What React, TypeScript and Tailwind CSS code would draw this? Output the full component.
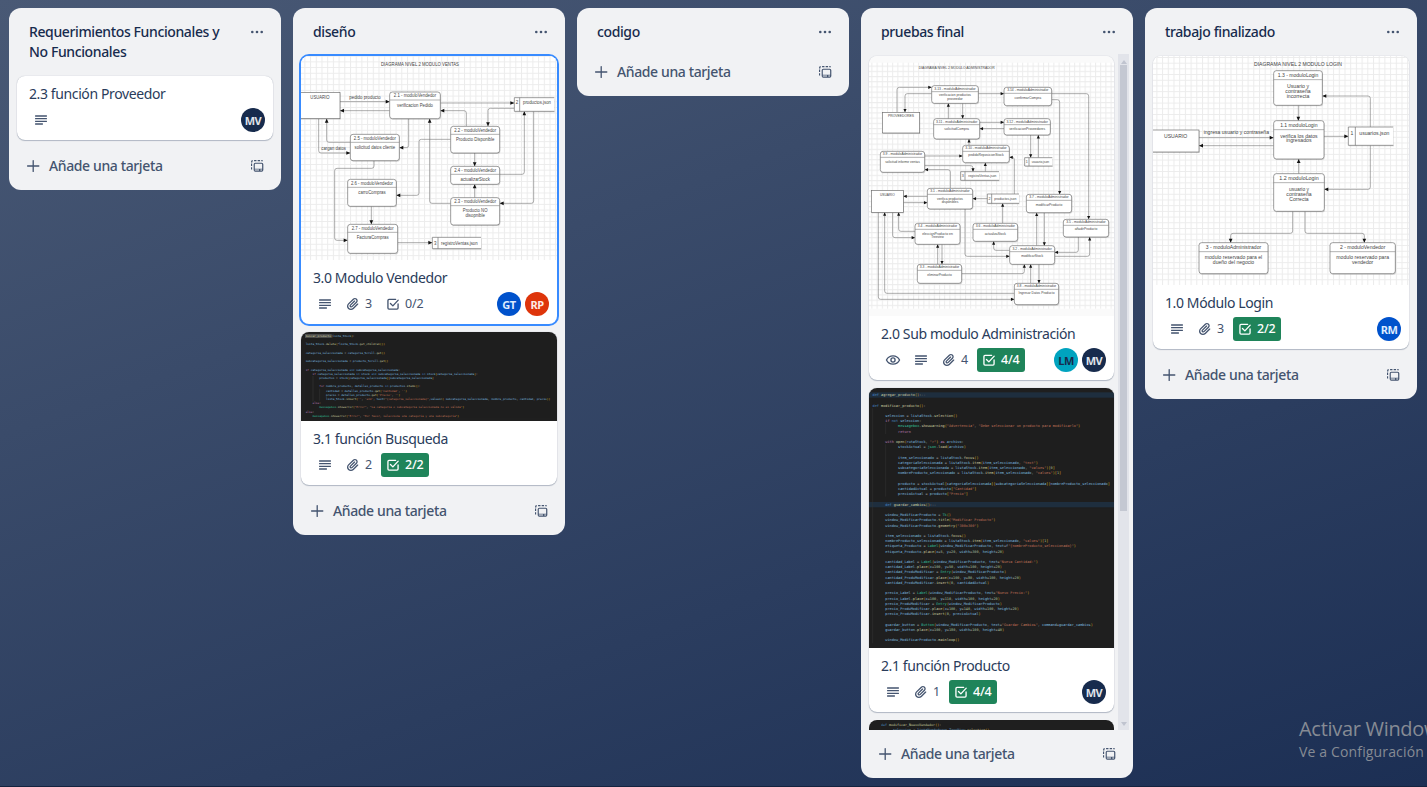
import React from "react";

/* ---------- icons ---------- */

function DescriptionIcon() {
  return (
    <svg viewBox="0 0 24 24" className="size-4" fill="currentColor">
      <rect x="3" y="5" width="18" height="2" rx="0.6" />
      <rect x="3" y="9" width="18" height="2" rx="0.6" />
      <rect x="3" y="13" width="18" height="2" rx="0.6" />
      <rect x="3" y="17" width="12" height="2" rx="0.6" />
    </svg>
  );
}

function AttachmentIcon() {
  return (
    <svg viewBox="0 0 24 24" className="size-4" fill="currentColor">
      <path d="M11.6426 17.9647C10.1123 19.46 7.62736 19.4606 6.10092 17.9691C4.57505 16.478 4.57769 14.0467 6.10253 12.5566L13.2505 5.57184C14.1476 4.6952 15.5861 4.69251 16.4832 5.56921C17.3763 6.44184 17.3778 7.85135 16.4869 8.72199L9.78361 15.2722C9.53288 15.5172 9.12807 15.5163 8.86954 15.2636C8.61073 15.0107 8.60963 14.6158 8.86954 14.3618L15.0989 8.27463C15.4812 7.90109 15.4812 7.29546 15.0989 6.92192C14.7167 6.54838 14.0969 6.54838 13.7146 6.92192L7.48523 13.0091C6.45911 14.0118 6.46356 15.618 7.48523 16.6163C8.50674 17.6145 10.1511 17.6186 11.1679 16.6249L17.8712 10.0747C19.5274 8.45632 19.5244 5.83555 17.8676 4.2165C16.2047 2.59156 13.5266 2.59657 11.8662 4.21913L4.71822 11.2039C2.42951 13.4404 2.42555 17.083 4.71661 19.3218C7.00774 21.5606 10.7323 21.5597 13.0269 19.3174L19.7133 12.7837C20.0956 12.4101 20.0956 11.8045 19.7133 11.431C19.331 11.0574 18.7113 11.0574 18.329 11.431L11.6426 17.9647Z" />
    </svg>
  );
}

function ChecklistIcon() {
  return (
    <svg viewBox="0 0 24 24" className="size-4" fill="none" stroke="currentColor" strokeWidth="2" strokeLinecap="round" strokeLinejoin="round">
      <path d="M16 5H6a1.6 1.6 0 0 0-1.6 1.6V18A1.6 1.6 0 0 0 6 19.6h12a1.6 1.6 0 0 0 1.6-1.6v-6" />
      <path d="M8.2 11.2l3.6 3.6L19.8 6.2" />
    </svg>
  );
}

function WatchIcon() {
  return (
    <svg viewBox="0 0 24 24" className="size-4" fill="none" stroke="currentColor" strokeWidth="2">
      <path d="M2.2 12C4.2 8 7.8 5.8 12 5.8S19.8 8 21.8 12C19.8 16 16.2 18.2 12 18.2S4.2 16 2.2 12Z" strokeLinejoin="round" />
      <circle cx="12" cy="12" r="3.1" />
    </svg>
  );
}

function PlusIcon() {
  return (
    <svg viewBox="0 0 16 16" className="size-4 shrink-0" fill="none" stroke="currentColor" strokeWidth="1.3" strokeLinecap="round">
      <path d="M8.2 2.6V13.4M2.6 8H13.8" />
    </svg>
  );
}

function TemplateIcon() {
  return (
    <svg viewBox="0 0 24 24" className="size-4" fill="currentColor">
      <path d="M3 6a3 3 0 0 1 2.6-3v2A1 1 0 0 0 5 6v.6H3ZM7.6 3h3.6v1.7H7.6ZM13 3h3.6v1.7H13ZM18.4 3h.6a2 2 0 0 1 2 2h-2.6ZM3 8.4h1.7V12H3ZM3 13.8h1.7v3.400H3Z" />
      <path fillRule="evenodd" d="M9.500 7h9.500a2.500 2.500 0 0 1 2.500 2.500v8.500a2.500 2.500 0 0 1-2.500 2.500H9.500a2.500 2.500 0 0 1-2.500-2.500V9.500a2.500 2.500 0 0 1 2.500-2.500Zm0 1.800a.8.8 0 0 0-.8.8v6.400h11V9.600a.8.8 0 0 0-.8-.8ZM8.700 17.300v1.400h6.300v-1.400ZM17 17.300v1.400h2.600v-1.400Z" />
    </svg>
  );
}

function MoreIcon() {
  return (
    <svg viewBox="0 0 16 16" className="size-4" fill="currentColor">
      <circle cx="3.3" cy="8" r="1.3" />
      <circle cx="8" cy="8" r="1.3" />
      <circle cx="12.7" cy="8" r="1.3" />
    </svg>
  );
}

/* ---------- flow diagrams ---------- */

type Label = [text: string, cx: number, cy: number, width: number];
type Box = { x: number; y: number; w: number; h: number; head?: [string, number]; lines: [string, number, number][] };
type Store = { x: number; y: number; w: number; h: number; cell: number; id: string; label: Label };
type Diagram = {
  labels: Label[];
  boxes: Box[];
  stores: Store[];
  edges: number[][];
  font: number;
  headH: number;
};

function Txt({ l, size }: { l: Label; size: number }) {
  return (
    <text x={l[1]} y={l[2] + size * 0.36} textAnchor="middle" fontSize={size} textLength={l[3]} lengthAdjust="spacingAndGlyphs" fill="#444">
      {l[0]}
    </text>
  );
}

function roundedPath(p: number[]) {
  const pts: [number, number][] = [];
  for (let i = 0; i < p.length; i += 2) pts.push([p[i], p[i + 1]]);
  let d = `M${pts[0][0]} ${pts[0][1]}`;
  for (let i = 1; i < pts.length - 1; i++) {
    const [ax, ay] = pts[i - 1];
    const [bx, by] = pts[i];
    const [cx, cy] = pts[i + 1];
    const r = 7;
    d += `L${bx - Math.sign(bx - ax) * r} ${by - Math.sign(by - ay) * r}`;
    d += `Q${bx} ${by} ${bx + Math.sign(cx - bx) * r} ${by + Math.sign(cy - by) * r}`;
  }
  const e = pts[pts.length - 1];
  return d + `L${e[0]} ${e[1]}`;
}

function Edge({ p, k }: { p: number[]; k: number }) {
  const n = p.length;
  const x = p[n - 2];
  const y = p[n - 1];
  const dx = Math.sign(x - p[n - 4]);
  const dy = Math.sign(y - p[n - 3]);
  const a = 12 * k;
  const b = 5.5 * k;
  return (
    <g>
      <path d={roundedPath(p)} fill="none" stroke="#777" strokeWidth="1.8" />
      <path d={`M${x} ${y}L${x - dx * a - dy * b} ${y - dy * a - dx * b}L${x - dx * a + dy * b} ${y - dy * a + dx * b}Z`} fill="#111" />
    </g>
  );
}

function DiagramShapes({ d }: { d: Diagram }) {
  return (
    <g fontFamily="'Liberation Sans', Arial, sans-serif">
      {d.edges.map((p, i) => (
        <Edge key={i} p={p} k={d.headH < 20 ? 0.85 : 1} />
      ))}
      {d.boxes.map((b, i) => {
        const r = b.head ? 8 : 0;
        return (
          <g key={i}>
            <rect x={b.x + 2} y={b.y + 3} width={b.w} height={b.h} rx={r} fill="#000" opacity="0.15" />
            <rect x={b.x} y={b.y} width={b.w} height={b.h} rx={r} fill="#fff" stroke="#6c6c6c" strokeWidth="2" />
            {b.head && (
              <>
                <path d={`M${b.x} ${b.y + d.headH}h${b.w}`} stroke="#808080" strokeWidth="1.8" />
                <Txt l={[b.head[0], b.x + b.w / 2, b.y + d.headH / 2 - 0.5, b.head[1]]} size={d.font} />
              </>
            )}
            {b.lines.map((t, j) => (
              <Txt key={j} l={[t[0], b.x + b.w / 2, t[1], t[2]]} size={d.font} />
            ))}
          </g>
        );
      })}
      {d.stores.map((s, i) => (
        <g key={i}>
          <rect x={s.x + 2} y={s.y + 3} width={s.w} height={s.h} fill="#000" opacity="0.12" />
          <rect x={s.x} y={s.y} width={s.w} height={s.h} fill="#fff" />
          <path d={`M${s.x + s.w} ${s.y}H${s.x}V${s.y + s.h}H${s.x + s.w}M${s.x + s.cell} ${s.y}v${s.h}`} fill="none" stroke="#6c6c6c" strokeWidth="2" />
          <text x={s.x + s.cell / 2} y={s.label[2] + d.font * 0.36} fontSize={d.font} textAnchor="middle" fill="#444">
            {s.id}
          </text>
          <Txt l={s.label} size={d.font} />
        </g>
      ))}
      {d.labels.map((l, i) => (
        <Txt key={i} l={l} size={d.font + (i === 0 ? 1 : 0)} />
      ))}
    </g>
  );
}

function GridPattern({ id, size }: { id: string; size: number }) {
  return (
    <defs>
      <pattern id={id} width={size} height={size} patternUnits="userSpaceOnUse">
        <path d={`M0 1.5H${size}M1.5 0V${size}`} stroke="#ececec" strokeWidth="3" />
      </pattern>
    </defs>
  );
}

const ventas: Diagram = {
  font: 13.5,
  headH: 24,
  labels: [
    ["DIAGRAMA NIVEL 2 MODULO VENTAS", 381, 42, 234],
    ["pedido producto", 216, 141, 94],
    ["cargan datos", 122, 295, 74],
  ],
  boxes: [
    { x: 10, y: 127, w: 131, h: 79, lines: [] },
    { x: 290, y: 126, w: 152, h: 80, head: ["2.1 - moduloVendedor", 127], lines: [["verificacion Pedido", 165, 108]] },
    { x: 473, y: 229, w: 147, h: 80, head: ["2.2 - moduloVendedor", 126], lines: [["Producto Disponible", 268, 115]] },
    { x: 473, y: 349, w: 147, h: 54, head: ["2.4 - moduloVendedor", 126], lines: [["actualizarStock", 387, 88]] },
    { x: 473, y: 443, w: 147, h: 82, head: ["2.3 - moduloVendedor", 126], lines: [["Producto NO", 482, 74], ["disopnible", 495, 58]] },
    { x: 172, y: 253, w: 147, h: 79, head: ["2.5 - moduloVendedor", 126], lines: [["solicitud datos cliente", 292, 122]] },
    { x: 164, y: 388, w: 146, h: 81, head: ["2.6 - moduloVendedor", 126], lines: [["carroCompras", 427, 82]] },
    { x: 164, y: 523, w: 150, h: 87, head: ["2.7 - moduloVendedor", 126], lines: [["FacturaCompras", 562, 96]] },
  ],
  stores: [
    { x: 664, y: 143, w: 120, h: 41, cell: 16, id: "2", label: ["productos.json", 732, 158, 84] },
    { x: 418, y: 562, w: 146, h: 34, cell: 17, id: "3", label: ["registroVentas.json", 499, 579, 110] },
  ],
  edges: [
    [141, 155, 290, 155],
    [290, 182, 141, 182],
    [442, 159, 664, 159],
    [520, 229, 520, 182, 442, 182],
    [664, 175, 585, 175, 585, 229],
    [545, 309, 545, 349],
    [545, 443, 545, 403],
    [620, 373, 694, 373, 694, 184],
    [722, 184, 722, 460, 620, 460],
    [473, 460, 410, 460, 410, 206],
    [473, 268, 378, 268, 378, 436, 310, 436],
    [347, 206, 347, 293, 319, 293],
    [77, 206, 77, 309, 172, 309],
    [172, 277, 101, 277, 101, 206],
    [243, 332, 243, 355, 125, 355, 125, 571, 164, 571],
    [235, 469, 235, 523],
    [314, 578, 418, 578],
  ],
};

const administrador: Diagram = {
  font: 11,
  headH: 18,
  labels: [["DIAGRAMA NIVEL 2 MODULO ADMINISTRADOR", 287, 52, 228]],
  boxes: [
    { x: 64, y: 187, w: 112, h: 62, lines: [["PROVEEDORES", 198, 78]] },
    { x: 31, y: 421, w: 96, h: 66, lines: [["USUARIO", 434, 44]] },
    { x: 212, y: 107, w: 140, h: 53, head: ["3.13 - moduloAdministrador", 124], lines: [["verificacion productos", 135, 96], ["proveedor", 146, 46]] },
    { x: 429, y: 112, w: 143, h: 55, head: ["3.14 - moduloAdministrador", 124], lines: [["confirmarCompra", 142, 80]] },
    { x: 218, y: 206, w: 138, h: 61, head: ["3.11 - moduloAdministrador", 124], lines: [["solicitudCompra", 235, 74]] },
    { x: 429, y: 206, w: 139, h: 49, head: ["3.12 - moduloAdministrador", 124], lines: [["verificacionProveedores", 235, 108]] },
    { x: 305, y: 286, w: 140, h: 52, head: ["3.10 - moduloAdministrador", 124], lines: [["pedidoReposicionStock", 315, 106]] },
    { x: 58, y: 304, w: 133, h: 63, head: ["3.9 - moduloAdministrador", 118], lines: [["solicitud informe ventas", 334, 104]] },
    { x: 199, y: 415, w: 136, h: 62, head: ["3.1 - moduloAdministrador", 118], lines: [["verifica productos", 446, 78], ["disponibles", 456, 50]] },
    { x: 496, y: 433, w: 136, h: 55, head: ["3.7 - moduloAdministrador", 118], lines: [["modificarProducto", 463, 80]] },
    { x: 607, y: 508, w: 136, h: 53, head: ["3.5 - moduloAdministrador", 118], lines: [["añadirProducto", 537, 68]] },
    { x: 162, y: 520, w: 135, h: 63, head: ["3.4 - moduloAdministrador", 118], lines: [["eleccionProducto en", 550, 92], ["Treeview", 560, 38]] },
    { x: 336, y: 520, w: 134, h: 54, head: ["3.6 - moduloAdministrador", 118], lines: [["actualizaStock", 550, 64]] },
    { x: 446, y: 587, w: 135, h: 56, head: ["3.2 - moduloAdministrador", 118], lines: [["modificarStock", 617, 66]] },
    { x: 169, y: 643, w: 133, h: 57, head: ["3.3 - moduloAdministrador", 118], lines: [["eliminarProducto", 674, 74]] },
    { x: 460, y: 700, w: 133, h: 64, head: ["3.8 - moduloAdministrador", 118], lines: [["Ingresar Datos Producto", 728, 108]] },
  ],
  stores: [
    { x: 491, y: 323, w: 83, h: 25, cell: 13, id: "1", label: ["usuario.json", 538, 335, 52] },
    { x: 299, y: 365, w: 115, h: 26, cell: 13, id: "3", label: ["registroVentas.json", 364, 378, 84] },
    { x: 379, y: 432, w: 95, h: 28, cell: 13, id: "2", label: ["productos.json", 433, 446, 66] },
  ],
  edges: [
    [108, 187, 108, 112, 212, 112],
    [212, 131, 132, 131, 132, 187],
    [352, 131, 429, 131],
    [262, 206, 262, 160],
    [305, 160, 305, 206],
    [356, 217, 429, 217],
    [429, 236, 356, 236],
    [572, 131, 683, 131, 683, 508],
    [572, 149, 596, 149, 596, 433],
    [324, 286, 324, 267],
    [191, 318, 305, 318],
    [191, 347, 336, 347, 336, 365],
    [373, 365, 373, 338],
    [460, 432, 460, 322, 445, 322],
    [509, 255, 509, 323],
    [532, 323, 532, 255],
    [268, 415, 268, 359, 191, 359],
    [199, 439, 127, 439],
    [127, 458, 199, 458],
    [379, 446, 335, 446],
    [312, 477, 312, 619, 446, 619],
    [52, 487, 52, 748, 460, 748],
    [460, 730, 71, 730, 71, 487],
    [95, 487, 95, 563, 162, 563],
    [162, 544, 113, 544, 113, 487],
    [425, 520, 425, 460],
    [446, 601, 398, 601, 398, 574],
    [527, 587, 527, 488],
    [550, 488, 550, 587],
    [652, 561, 652, 607, 581, 607],
    [581, 619, 686, 619, 686, 561],
    [302, 671, 490, 671, 490, 643],
    [230, 643, 230, 583],
    [243, 583, 243, 643],
    [509, 700, 509, 643],
    [534, 643, 534, 700],
  ],
};

const login: Diagram = {
  font: 15,
  headH: 27,
  labels: [
    ["DIAGRAMA NIVEL 2 MODULO LOGIN", 459, 193, 264],
    ["ingresa usuario y contraseña", 274, 397, 196],
  ],
  boxes: [
    { x: 10, y: 390, w: 152, h: 66, lines: [] },
    { x: 386, y: 212, w: 146, h: 104, head: ["1.3 - moduloLogin", 122], lines: [["Usuario y", 258, 66], ["contraseña", 273, 76], ["incorrecta", 288, 68]] },
    { x: 386, y: 362, w: 151, h: 115, head: ["1.1 moduloLogin", 112], lines: [["verifica los datos", 408, 112], ["ingresados", 422, 76]] },
    { x: 386, y: 521, w: 152, h: 113, head: ["1.2  moduloLogin", 118], lines: [["usuario y", 567, 60], ["contraseña", 582, 76], ["Correcta", 597, 58]] },
    { x: 162, y: 728, w: 207, h: 93, head: ["3 - moduloAdministrador", 166], lines: [["modulo reservado para el", 773, 172], ["dueño del negocio", 787, 124]] },
    { x: 555, y: 728, w: 196, h: 93, head: ["2 - moduloVendedor", 136], lines: [["modulo reservado para", 773, 158], ["vendedor", 787, 64]] },
  ],
  stores: [{ x: 610, y: 381, w: 135, h: 55, cell: 21, id: "1", label: ["usuarios.json", 688, 399, 90] }],
  edges: [
    [460, 316, 460, 362],
    [162, 413, 386, 413],
    [386, 437, 162, 437],
    [537, 409, 610, 409],
    [461, 521, 461, 477],
    [676, 381, 676, 288, 532, 288],
    [676, 436, 676, 568, 538, 568],
    [443, 634, 443, 700, 257, 700, 257, 728],
    [480, 634, 480, 700, 658, 700, 658, 728],
  ],
};

function VentasCover() {
  return (
    <svg viewBox="24 18 768 612" className="block h-[204px] w-full bg-white">
      <GridPattern id="grid-ventas" size={17.1} />
      <rect x="24" y="18" width="768" height="612" fill="url(#grid-ventas)" />
      <DiagramShapes d={ventas} />
      <g fontFamily="'Liberation Sans', Arial, sans-serif">
        <Txt l={["USUARIO", 81, 142, 58]} size={13.5} />
      </g>
    </svg>
  );
}

function AdministradorCover() {
  return (
    <svg viewBox="24 18 735 780" className="block h-[260px] w-full bg-[#fafafa]">
      <GridPattern id="grid-admin" size={15.6} />
      <rect x="24" y="38" width="735" height="738" fill="#fff" />
      <rect x="24" y="38" width="735" height="738" fill="url(#grid-admin)" />
      <DiagramShapes d={administrador} />
    </svg>
  );
}

function LoginCover() {
  return (
    <svg viewBox="24 168 768 687" className="block h-[229px] w-full bg-white">
      <GridPattern id="grid-login" size={17.1} />
      <rect x="24" y="168" width="768" height="687" fill="url(#grid-login)" />
      <DiagramShapes d={login} />
      <g fontFamily="'Liberation Sans', Arial, sans-serif">
        <Txt l={["USUARIO", 92, 408, 70]} size={15} />
      </g>
    </svg>
  );
}

/* ---------- code covers ---------- */

type CodeLine = [row: number, indent: number, text: string];

const TOKEN = /("[^"]*"?|'[^']*'?)|(\b\d+\b)|([A-Za-z_À-ÿ][\wÀ-ÿ]*)(?=(\()?)|([()[\]{}])|([^\w"'()[\]{}]+)/g;
const CLASSES = ["Tk", "Label", "Entry", "Button", "messagebox", "json"];
const CONTROL = ["if", "else", "for", "with", "as", "return"];
const WORDS = ["def", "and", "in", "not"];

function tokenColor(m: RegExpMatchArray) {
  if (m[1]) return "#ce7a5e";
  if (m[2]) return "#b5cea8";
  if (m[3]) {
    if (CLASSES.includes(m[3])) return "#35c9a0";
    if (CONTROL.includes(m[3])) return "#c586c0";
    if (WORDS.includes(m[3])) return "#4a90d0";
    return m[4] ? "#dcdcaa" : "#86c5ea";
  }
  if (m[5]) return "#e8c020";
  return "#b4b4b4";
}

function Code({ lines, x, y, pitch, char }: { lines: CodeLine[]; x: number; y: number; pitch: number; char: number }) {
  const size = char / 0.602;
  return (
    <g fontFamily="'DejaVu Sans Mono', monospace" fontSize={size} opacity="0.92">
      {lines.map(([row, indent, text]) => (
        <text key={row} x={x + indent * char} y={y + row * pitch + size * 0.32}>
          {Array.from(text.matchAll(TOKEN)).map((m, i) => (
            <tspan key={i} fill={tokenColor(m)}>
              {m[0]}
            </tspan>
          ))}
        </text>
      ))}
    </g>
  );
}

const busqueda: CodeLine[] = [
  [0, 0, "buscar_producto(lista_Stock):"],
  [2, 0, "lista_Stock.delete(*lista_Stock.get_children())"],
  [4, 0, "categoria_seleccionada = categoria_Scroll.get()"],
  [6, 0, "subcategoria_seleccionada = producto_Scroll.get()"],
  [8, 0, "if categoria_seleccionada and subcategoria_seleccionada:"],
  [9, 4, "if categoria_seleccionada in stock and subcategoria_seleccionada in stock[categoria_seleccionada]:"],
  [10, 8, "productos = stock[categoria_seleccionada][subcategoria_seleccionada]"],
  [12, 8, "for nombre_producto, detalles_producto in productos.items():"],
  [13, 12, "cantidad = detalles_producto.get('Cantidad', '')"],
  [14, 12, "precio = detalles_producto.get('Precio', '')"],
  [15, 12, "lista_Stock.insert('', 'end', text=\"{categoria_seleccionada}\",values=( subcategoria_seleccionada, nombre_producto, cantidad, precio))"],
  [16, 4, "else:"],
  [17, 8, 'messagebox.showerror("Error", "La categoria o subcategoria seleccionada no es válida")'],
  [18, 0, "else:"],
  [19, 4, 'messagebox.showerror("Error", "Por favor, seleccione una categoría y una subcategoría")'],
];

const producto: CodeLine[] = [
  [0, -6, "def agregar_producto():--"],
  [2, -6, "def modificar_producto():"],
  [4, 0, "seleccion = listaStock.selection()"],
  [5, 0, "if not seleccion:"],
  [6, 6, 'messagebox.showwarning("Advertencia", "Debe seleccionar un producto para modificarlo")'],
  [7, 6, "return"],
  [9, 0, 'with open(rutaStock, "r") as archivo:'],
  [10, 6, "stockActual = json.load(archivo)"],
  [12, 6, "item_seleccionado = listaStock.focus()"],
  [13, 6, 'categoriaSeleccionada = listaStock.item(item_seleccionado, "text")'],
  [14, 6, 'subcategoriaSeleccionada = listaStock.item(item_seleccionado, "values")[0]'],
  [15, 6, 'nombreProducto_seleccionado = listaStock.item(item_seleccionado, "values")[1]'],
  [17, 6, "producto = stockActual[categoriaSeleccionada][subcategoriaSeleccionada][nombreProducto_seleccionado]"],
  [18, 6, 'cantidadActual = producto["Cantidad"]'],
  [19, 6, 'precioActual = producto["Precio"]'],
  [21, 0, "def guardar_cambios():--"],
  [23, 0, "window_ModificarProducto = Tk()"],
  [24, 0, 'window_ModificarProducto.title("Modificar Producto")'],
  [25, 0, 'window_ModificarProducto.geometry("300x300")'],
  [27, 0, "item_seleccionado = listaStock.focus()"],
  [28, 0, 'nombreProducto_seleccionado = listaStock.item(item_seleccionado, "values")[1]'],
  [29, 0, 'etiqueta_Producto = Label(window_ModificarProducto, text=f"{nombreProducto_seleccionado}")'],
  [30, 0, "etiqueta_Producto.place(x=5, y=20, width=300, height=20)"],
  [32, 0, 'cantidad_Label = Label(window_ModificarProducto, text="Nueva Cantidad:")'],
  [33, 0, "cantidad_Label.place(x=100, y=50, width=100, height=20)"],
  [34, 0, "cantidad_ProduModificar = Entry(window_ModificarProducto)"],
  [35, 0, "cantidad_ProduModificar.place(x=100, y=80, width=100, height=20)"],
  [36, 0, "cantidad_ProduModificar.insert(0, cantidadActual)"],
  [38, 0, 'precio_Label = Label(window_ModificarProducto, text="Nuevo Precio:")'],
  [39, 0, "precio_Label.place(x=100, y=110, width=100, height=20)"],
  [40, 0, "precio_ProduModificar = Entry(window_ModificarProducto)"],
  [41, 0, "precio_ProduModificar.place(x=100, y=140, width=100, height=20)"],
  [42, 0, "precio_ProduModificar.insert(0, precioActual)"],
  [44, 0, 'guardar_button = Button(window_ModificarProducto, text="Guardar Cambios", command=guardar_cambios)'],
  [45, 0, "guardar_button.place(x=100, y=180, width=100, height=40)"],
  [47, 0, "window_ModificarProducto.mainloop()"],
];

const vendedor: CodeLine[] = [
  [0, 0, "def modificar_NuevoVendedor():"],
  [1, 6, "seleccion = listaVendedores_TreeView.selection()"],
];

function BusquedaCover() {
  return (
    <svg viewBox="24 216 768 267" className="block h-[89px] w-full bg-[#1f1f1f]">
      <rect x="36" y="222" width="80" height="12" fill="#4b4b4b" />
      <path d="M60 348V425M80 386V422" stroke="#383838" strokeWidth="1.5" />
      <Code lines={busqueda} x={38} y={228} pitch={12.6} char={5.09} />
    </svg>
  );
}

function ProductoCover() {
  return (
    <svg viewBox="24 234 735 780" className="block h-[260px] w-full bg-[#1f1f1f]">
      <rect x="24" y="247" width="735" height="16" fill="#1f2f3e" />
      <rect x="24" y="576" width="735" height="16" fill="#1f2f3e" />
      <path d="M35 295V1000M74 340V372M74 403V560" stroke="#363636" strokeWidth="1.5" />
      <Code lines={producto} x={73} y={255} pitch={15.65} char={6.38} />
    </svg>
  );
}

function VendedorCover() {
  return (
    <svg viewBox="24 240 735 780" className="block h-[260px] w-full bg-[#1f1f1f]">
      <Code lines={vendedor} x={60} y={256} pitch={13} char={6.05} />
    </svg>
  );
}

/* ---------- board ---------- */

const AVATARS = {
  MV: "bg-[#172b4d] text-[#dfe3ea]",
  GT: "bg-[#0052cc] text-[#deebff]",
  RP: "bg-[#de350b] text-[#ffebe6]",
  LM: "bg-[#00a3bf] text-[#172b4d]",
  RM: "bg-[#0052cc] text-[#deebff]",
};

function Avatar({ who }: { who: keyof typeof AVATARS }) {
  return (
    <span className={`flex size-6 items-center justify-center rounded-full text-[11px] leading-none font-bold tracking-[-0.5px] ${AVATARS[who]}`}>
      {who}
    </span>
  );
}

type CardProps = {
  title: string;
  cover?: React.ReactNode;
  watching?: boolean;
  attachments?: number;
  checklist?: string;
  done?: boolean;
  members: (keyof typeof AVATARS)[];
  selected?: boolean;
};

function Card({ title, cover, watching, attachments, checklist, done, members, selected }: CardProps) {
  const edge = selected
    ? "shadow-[0_0_0_2px_#388bff]"
    : "shadow-[0_1px_1px_#091e4240,0_0_1px_#091e424f]";
  return (
    <li className={`shrink-0 rounded-lg bg-white ${edge}`}>
      {cover && <div className="overflow-hidden rounded-t-lg">{cover}</div>}
      <div className="py-2 pr-2 pl-3">
        <h3 className="mb-1 text-sm leading-5 tracking-[-0.39px] whitespace-nowrap text-[#2a3c5b]">{title}</h3>
        <div className="flex h-6 items-center justify-between text-[#44546f]">
          <div className="flex gap-1 text-[12.5px] tracking-[-0.2px]">
            {watching && <span className="flex size-6 items-center justify-center"><WatchIcon /></span>}
            <span className="flex size-6 items-center justify-center"><DescriptionIcon /></span>
            {attachments !== undefined && (
              <span className="flex h-6 w-9 items-center gap-1 pl-1"><AttachmentIcon />{attachments}</span>
            )}
            {checklist && (
              <span className={`flex h-6 w-12 items-center gap-1 rounded-[3px] pl-1 ${done ? "bg-[#1f845a] font-medium text-white" : ""}`}>
                <ChecklistIcon />{checklist}
              </span>
            )}
          </div>
          <div className="flex gap-1">
            {members.map((m) => <Avatar key={m} who={m} />)}
          </div>
        </div>
      </div>
    </li>
  );
}

function ListHeader({ title }: { title: string }) {
  return (
    <header className="flex shrink-0 items-start justify-between px-2 pt-2">
      <h2 className="w-[210px] py-1.5 pl-3 text-sm leading-5 font-medium tracking-[-0.38px] text-[#172b4d]">{title}</h2>
      <button className="flex size-8 items-center justify-center text-[#44546f]"><MoreIcon /></button>
    </header>
  );
}

function ListFooter() {
  return (
    <footer className="flex shrink-0 items-center justify-between p-2 text-[#44546f]">
      <button className="flex h-8 items-center gap-2 pl-2 text-sm font-medium tracking-[-0.38px] whitespace-nowrap"><PlusIcon />Añade una tarjeta</button>
      <button className="flex size-8 items-center justify-center"><TemplateIcon /></button>
    </footer>
  );
}

function List({ title, children }: { title: string; children?: React.ReactNode }) {
  return (
    <section className="flex w-[272px] shrink-0 flex-col rounded-xl bg-[#f1f2f4]">
      <ListHeader title={title} />
      {children && <ol className="flex flex-col gap-2 px-2 pt-2 pb-0.5">{children}</ol>}
      <ListFooter />
    </section>
  );
}

function Scrollbar() {
  return (
    <div className="flex h-[676px] w-[11px] shrink-0 flex-col items-center justify-between bg-[#e2e4ea] py-1">
      <svg viewBox="0 0 6 4" className="mt-0.5 h-[4px] w-[6px]" fill="#c0c4cf"><path d="M3 0L6 4H0Z" /></svg>
      <div className="mt-[1px] mb-auto h-[446px] w-[7px] bg-[#c4c8d2]" />
      <svg viewBox="0 0 6 4" className="h-[4px] w-[6px]" fill="#c0c4cf"><path d="M3 4L6 0H0Z" /></svg>
    </div>
  );
}

export default function App() {
  return (
    <div className="relative h-[787px] w-[1427px] overflow-hidden border-b border-[#14233f] bg-[linear-gradient(160deg,#495975_0%,#1c2f54_100%)] font-['Noto_Sans','Open_Sans',sans-serif]">
      <main className="flex items-start gap-3 pt-2 pl-[9px]">
        <List title="Requerimientos Funcionales y No Funcionales">
          <Card title="2.3 función Proveedor" members={["MV"]} />
        </List>
        <List title="diseño">
          <Card title="3.0 Modulo Vendedor" cover={<VentasCover />} attachments={3} checklist="0/2" members={["GT", "RP"]} selected />
          <Card title="3.1 función Busqueda" cover={<BusquedaCover />} attachments={2} checklist="2/2" done members={[]} />
        </List>
        <List title="codigo" />
        <section className="flex h-[770px] w-[272px] shrink-0 flex-col rounded-xl bg-[#f1f2f4]">
          <ListHeader title="pruebas final" />
          <div className="flex h-[682px] justify-between overflow-hidden pt-1.5 pr-1 pl-1">
            <ol className="flex h-[676px] w-[253px] flex-col gap-2 overflow-hidden px-1 pt-0.5">
              <Card title="2.0 Sub modulo Administración" cover={<AdministradorCover />} watching attachments={4} checklist="4/4" done members={["LM", "MV"]} />
              <Card title="2.1 función Producto" cover={<ProductoCover />} attachments={1} checklist="4/4" done members={["MV"]} />
              <li className="shrink-0 overflow-hidden rounded-t-lg"><VendedorCover /></li>
            </ol>
            <Scrollbar />
          </div>
          <ListFooter />
        </section>
        <List title="trabajo finalizado">
          <Card title="1.0 Módulo Login" cover={<LoginCover />} attachments={3} checklist="2/2" done members={["RM"]} />
        </List>
      </main>
      <div className="absolute top-[716px] left-[1299px] font-['Open_Sans','Noto_Sans',sans-serif] whitespace-nowrap text-[#868b94]">
        <p className="text-[20px] leading-[26px] tracking-[-0.3px]">Activar Windows</p>
        <p className="text-[14px] leading-[20px] tracking-[0.15px]">Ve a Configuración para activar Windows.</p>
      </div>
    </div>
  );
}
